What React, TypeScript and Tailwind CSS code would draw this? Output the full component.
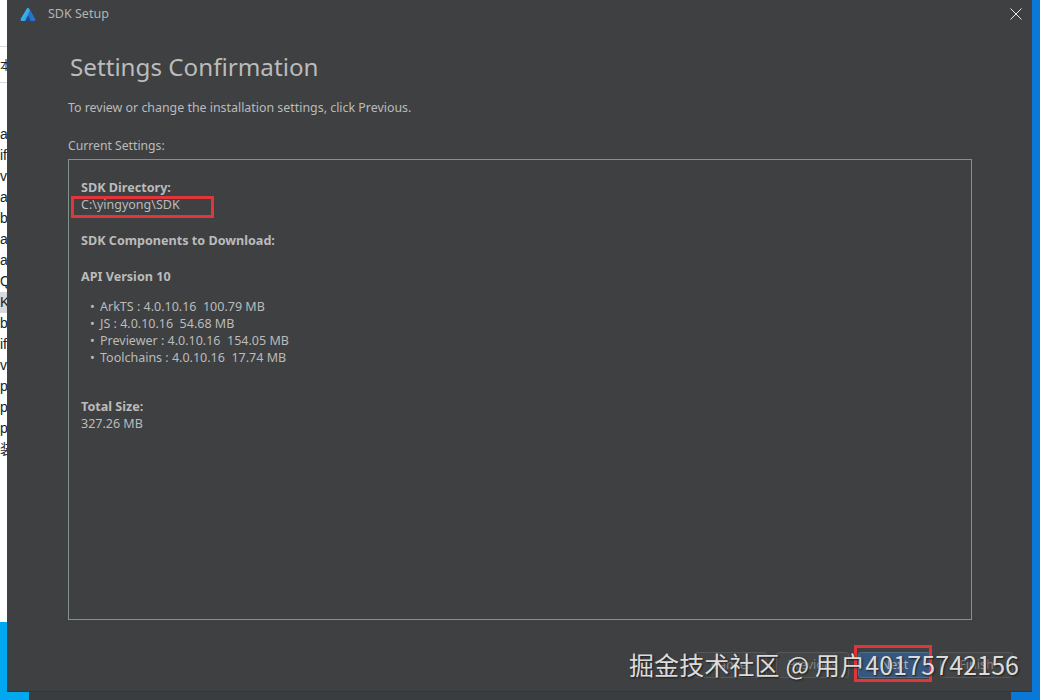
import React from 'react';

const strip = [
  { text: 'a' },
  { text: 'if' },
  { text: 'v' },
  { text: 'a' },
  { text: 'b' },
  { text: 'av' },
  { text: 'av' },
  { text: 'Q' },
  { text: 'K', selected: true },
  { text: 'b' },
  { text: 'if' },
  { text: 'v' },
  { text: 'p' },
  { text: 'p' },
  { text: 'p' },
  { text: '装' },
];

const components = [
  { name: 'ArkTS', version: '4.0.10.16', size: '100.79 MB' },
  { name: 'JS', version: '4.0.10.16', size: '54.68 MB' },
  { name: 'Previewer', version: '4.0.10.16', size: '154.05 MB' },
  { name: 'Toolchains', version: '4.0.10.16', size: '17.74 MB' },
];

const FooterButton = ({ label, primary }: { label: string; primary?: boolean }) => (
  <div
    className={`w-[73px] h-[26px] flex items-center justify-center rounded-[3px] border text-[12.5px] ${
      primary ? 'bg-[#365880] border-[#4c708c] text-[#a9b4c0]' : 'bg-[#434547] border-[#55585a] text-[#85878a]'
    }`}
  >
    {label}
  </div>
);

const Logo = () => (
  <svg width="16" height="15" viewBox="0 0 17 16">
    <defs>
      <linearGradient id="logoLeft" x1="0" y1="0" x2="1" y2="1">
        <stop offset="0" stopColor="#45c0ec" />
        <stop offset="1" stopColor="#2a9ae0" />
      </linearGradient>
    </defs>
    <path d="M7.6 1.2 Q8.6 .2 9.6 1.2 L16.2 12.6 Q17 14.6 15.2 14.8 L1.8 14.8 Q0 14.6 .8 12.6 Z" fill="#2a72c8" />
    <path d="M7.6 1.2 Q8.2 .6 8.8 .8 L10.4 3.6 L5.6 14.8 L1.8 14.8 Q0 14.6 .8 12.6 Z" fill="url(#logoLeft)" />
    <path d="M8.6 9 L11.4 14.8 L5.6 14.8 Z" fill="#1c4a88" />
  </svg>
);

export default function App() {
  return (
    <div className="relative w-[1040px] h-[700px] overflow-hidden bg-[#0a78d7] font-['Noto_Sans','Open_Sans',sans-serif]">
      <div className="flex h-[692px]">
        {/* desktop window peeking out on the left */}
        <div className="w-[7px] shrink-0 flex flex-col overflow-hidden">
          <div className="h-[622px] bg-white text-[14px] text-[#222]">
            <div className="h-[47px] border-b border-[#d8d8d8]" />
            <div className="h-[36px] border-b border-[#d8d8d8] flex items-center">
              <span className="font-['Noto_Sans_CJK_SC',sans-serif] text-[12px] whitespace-nowrap">本</span>
            </div>
            <div className="mt-[41px]">
              {strip.map((row, i) => (
                <div
                  key={i}
                  className={`h-[21px] leading-[21px] whitespace-nowrap font-['Liberation_Sans','Noto_Sans_CJK_SC',sans-serif] ${
                    row.selected ? 'bg-[#d9d9d9]' : ''
                  }`}
                >
                  {row.text}
                </div>
              ))}
            </div>
          </div>
          <div className="flex-1 bg-[#00a8f0]" />
        </div>

        {/* installer window */}
        <div className="w-[1025px] shrink-0 bg-[#3e4042] border-b border-[#333537] flex flex-col">
          <div className="h-[28px] flex items-center pl-[13px] pr-[10px]">
            <Logo />
            <span className="ml-[12px] text-[12.5px] text-[#b4b4b4]">SDK Setup</span>
            <svg className="ml-auto" width="12" height="12" viewBox="0 0 12 12" stroke="#e8e8e8" strokeWidth="1">
              <path d="M.5 .5 L11.5 11.5 M11.5 .5 L.5 11.5" />
            </svg>
          </div>

          <div className="pl-[61px] pr-[60px] flex-1 flex flex-col">
            <h1 className="ml-[2px] mt-[20px] text-[24.2px] leading-[38px] font-normal text-[#bbbbbb]">Settings Confirmation</h1>
            <p className="mt-[13px] text-[12.4px] leading-[18px] text-[#bbbbbb]">
              To review or change the installation settings, click Previous.
            </p>
            <p className="mt-[20px] text-[12.2px] leading-[18px] text-[#bbbbbb]">Current Settings:</p>

            <div className="mt-[4px] h-[461px] border border-[#84928e] px-[12px] pt-[19px] text-[12.5px] leading-[17px] text-[#bbbbbb]">
              <div className="font-bold text-[12.6px]">SDK Directory:</div>
              <div>C:\yingyong\SDK</div>
              <div className="mt-[19px] font-bold text-[12.6px]">SDK Components to Download:</div>
              <div className="mt-[19px] font-bold text-[12.6px]">API Version 10</div>
              <ul className="mt-[13px] pl-[9px]">
                {components.map((c) => (
                  <li key={c.name} className="flex whitespace-pre">
                    <span className="w-[10px]">•</span>
                    <span>
                      {c.name} : {c.version}  {c.size}
                    </span>
                  </li>
                ))}
              </ul>
              <div className="mt-[32px] font-bold text-[12.6px]">Total Size:</div>
              <div>327.26 MB</div>
            </div>

            <div className="mt-[32px] -mr-[41px] flex justify-end gap-[9px]">
              <FooterButton label="Cancel" />
              <FooterButton label="Previous" />
              <FooterButton label="Next" primary />
              <FooterButton label="Finish" />
            </div>
          </div>
        </div>
        <div className="flex-1" />
      </div>

      {/* strip below the window */}
      <div className="h-[8px] flex">
        <div className="w-[29px] bg-[#00a8f0]" />
        <div className="w-[982px] bg-[#3a3d3f]" />
        <div className="flex-1 bg-[#0a78d7]" />
      </div>

      {/* red annotation boxes */}
      <div className="absolute left-[71px] top-[196px] w-[143px] h-[22px] border-[3px] border-[#e0353a]" />
      <div className="absolute left-[854px] top-[645px] w-[78px] h-[37px] border-[3px] border-[#e0353a]" />

      {/* watermark */}
      <div className="absolute left-[629px] top-[646px] text-[25px] leading-[36px] tracking-[0.12px] whitespace-nowrap text-[#dcdcdc] font-['Noto_Sans_CJK_SC',sans-serif] [text-shadow:1px_1px_2px_#1c1c1c]">
        掘金技术社区 @ 用户40175742156
      </div>
    </div>
  );
}
